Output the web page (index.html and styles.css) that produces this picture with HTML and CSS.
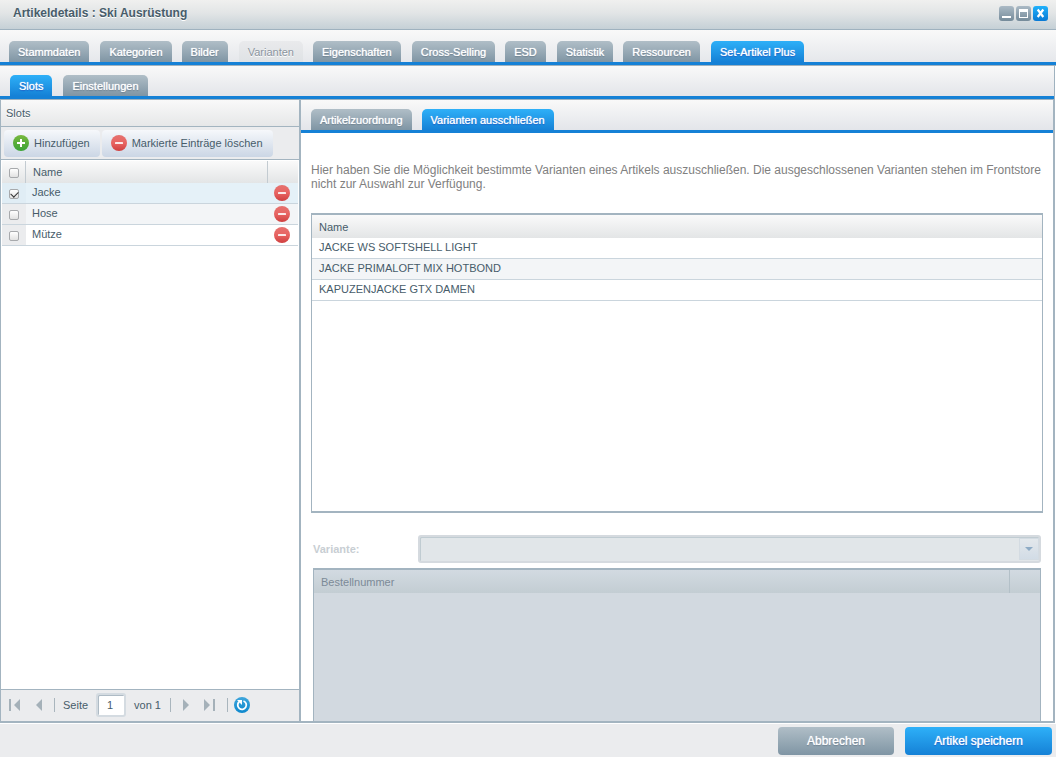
FILE: index.html
```html
<!DOCTYPE html>
<html lang="de">
<head>
<meta charset="utf-8">
<title>Artikeldetails : Ski Ausrüstung</title>
<link rel="stylesheet" href="styles.css">
</head>
<body>
<svg class="defs" aria-hidden="true">
  <defs>
    <linearGradient id="red" x1="0" y1="0" x2="0" y2="1"><stop offset="0" stop-color="#e5726f"/><stop offset=".5" stop-color="#e86462"/><stop offset="1" stop-color="#cf3f3f"/></linearGradient>
    <linearGradient id="green" x1="0" y1="0" x2="0" y2="1"><stop offset="0" stop-color="#78b83e"/><stop offset="1" stop-color="#3aa335"/></linearGradient>
    <linearGradient id="blue" x1="0" y1="0" x2="0" y2="1"><stop offset="0" stop-color="#3fa6dc"/><stop offset="1" stop-color="#0d88cd"/></linearGradient>
    <symbol id="minus" viewBox="0 0 16 16"><circle cx="8" cy="8" r="8" fill="url(#red)"/><rect x="4" y="7" width="8" height="2" rx=".5" fill="#fbe9e9"/></symbol>
    <symbol id="plus" viewBox="0 0 16 16"><circle cx="8" cy="8" r="8" fill="url(#green)"/><path d="M7 4h2v3h3v2H9v3H7V9H4V7h3z" fill="#fff"/></symbol>
  </defs>
</svg>

<header class="titlebar">
  <h1 class="title">Artikeldetails : Ski Ausrüstung</h1>
  <div class="tools">
    <button class="tool" type="button" aria-label="Minimieren"><svg viewBox="0 0 15 15"><rect x="3" y="10" width="9" height="2" fill="#fff"/></svg></button>
    <button class="tool" type="button" aria-label="Maximieren"><svg viewBox="0 0 15 15"><path d="M3 3h9v9H3zM4 6v5h7V6z" fill="#fff" fill-rule="evenodd"/></svg></button>
    <button class="tool tool-close" type="button" aria-label="Schließen"><svg viewBox="0 0 15 15"><path d="M4.700 3.500l5.600 7.500M10.300 3.500l-5.600 7.500" stroke="#fff" stroke-width="2.200"/></svg></button>
  </div>
</header>

<nav class="tabbar">
  <button class="tab" type="button">Stammdaten</button>
  <button class="tab" type="button">Kategorien</button>
  <button class="tab" type="button">Bilder</button>
  <button class="tab" type="button" disabled>Varianten</button>
  <button class="tab" type="button">Eigenschaften</button>
  <button class="tab" type="button">Cross-Selling</button>
  <button class="tab" type="button">ESD</button>
  <button class="tab" type="button">Statistik</button>
  <button class="tab" type="button">Ressourcen</button>
  <button class="tab active" type="button">Set-Artikel Plus</button>
</nav>

<nav class="tabbar sub">
  <button class="tab active" type="button">Slots</button>
  <button class="tab" type="button">Einstellungen</button>
</nav>

<main class="workspace">
  <section class="slots">
    <h2 class="panel-title">Slots</h2>
    <div class="toolbar">
      <button class="action" type="button"><svg class="icon"><use href="#plus"/></svg>Hinzufügen</button>
      <button class="action" type="button"><svg class="icon"><use href="#minus"/></svg>Markierte Einträge löschen</button>
    </div>
    <div class="slot-list">
      <table class="grid checkgrid">
        <thead>
          <tr><th class="check"><input type="checkbox" aria-label="Alle auswählen"></th><th class="name">Name</th><th class="remove"></th></tr>
        </thead>
        <tbody>
          <tr class="selected"><td class="check"><input type="checkbox" aria-label="Jacke auswählen" checked></td><td class="name">Jacke</td><td class="remove"><button class="delete" type="button" aria-label="Jacke löschen"><svg class="icon"><use href="#minus"/></svg></button></td></tr>
          <tr><td class="check"><input type="checkbox" aria-label="Hose auswählen"></td><td class="name">Hose</td><td class="remove"><button class="delete" type="button" aria-label="Hose löschen"><svg class="icon"><use href="#minus"/></svg></button></td></tr>
          <tr><td class="check"><input type="checkbox" aria-label="Mütze auswählen"></td><td class="name">Mütze</td><td class="remove"><button class="delete" type="button" aria-label="Mütze löschen"><svg class="icon"><use href="#minus"/></svg></button></td></tr>
        </tbody>
      </table>
    </div>
    <div class="pager">
      <button class="page-btn" type="button" aria-label="Erste Seite"><svg viewBox="0 0 16 16"><path d="M3 2h2v12H3zM14 2v12L8 8z"/></svg></button>
      <button class="page-btn" type="button" aria-label="Vorherige Seite"><svg viewBox="0 0 16 16"><path d="M12 2v12L6 8z"/></svg></button>
      <span class="sep"></span>
      <label class="page-label" for="page">Seite</label>
      <input class="page-input" id="page" type="text" value="1">
      <span class="page-total">von 1</span>
      <span class="sep"></span>
      <button class="page-btn" type="button" aria-label="Nächste Seite"><svg viewBox="0 0 16 16"><path d="M4 2v12l6-6z"/></svg></button>
      <button class="page-btn" type="button" aria-label="Letzte Seite"><svg viewBox="0 0 16 16"><path d="M1 2v12l6-6zM10 2h2v12h-2z"/></svg></button>
      <span class="sep"></span>
      <button class="page-btn refresh" type="button" aria-label="Aktualisieren"><svg viewBox="0 0 16 16"><circle cx="8" cy="8" r="8" fill="url(#blue)"/><path d="M5.200 4.800A4.300 4.300 0 1 0 9.500 4" fill="none" stroke="#fff" stroke-width="1.800"/><path d="M3 3h5v5z" fill="#fff"/></svg></button>
    </div>
  </section>

  <section class="detail">
    <nav class="tabbar inner">
      <button class="tab" type="button">Artikelzuordnung</button>
      <button class="tab active" type="button">Varianten ausschließen</button>
    </nav>
    <div class="content">
      <p class="hint">Hier haben Sie die Möglichkeit bestimmte Varianten eines Artikels auszuschließen. Die ausgeschlossenen Varianten stehen im Frontstore nicht zur Auswahl zur Verfügung.</p>
      <div class="box variants">
        <table class="grid">
          <thead><tr><th>Name</th></tr></thead>
          <tbody>
            <tr><td>JACKE WS SOFTSHELL LIGHT</td></tr>
            <tr><td>JACKE PRIMALOFT MIX HOTBOND</td></tr>
            <tr><td>KAPUZENJACKE GTX DAMEN</td></tr>
          </tbody>
        </table>
      </div>
      <div class="variant-form">
        <div class="field">
          <label class="field-label" for="variant">Variante:</label>
          <div class="combo">
            <select class="combo-select" id="variant" disabled><option></option></select>
            <span class="trigger"><svg viewBox="0 0 8 4"><path d="M0 0h8L4 4z" fill="#8eabc5"/></svg></span>
          </div>
        </div>
        <div class="box numbers">
          <table class="grid">
            <thead><tr><th>Bestellnummer</th><th class="remove"></th></tr></thead>
          </table>
        </div>
      </div>
    </div>
  </section>
</main>

<footer class="footer">
  <button class="btn cancel" type="button">Abbrechen</button>
  <button class="btn save" type="button">Artikel speichern</button>
</footer>
</body>
</html>
```
FILE: styles.css
```css
* {
  box-sizing: border-box;
}

body {
  display: flex;
  flex-direction: column;
  height: 100vh;
  margin: 0;
  overflow: hidden;
  background: #fff;
  color: #475c6a;
  font: 11px/14px "Liberation Sans", Arial, sans-serif;
}

button,
input,
select {
  margin: 0;
  padding: 0;
  border: 0;
  color: inherit;
  font: inherit;
}

button {
  background: none;
}

.defs {
  position: absolute;
  width: 0;
  height: 0;
}

.icon {
  display: block;
  flex: none;
  width: 16px;
  height: 16px;
}

.titlebar {
  display: flex;
  justify-content: space-between;
  flex: none;
  height: 30px;
  padding: 6px 8px 0 13px;
  border-bottom: 1px solid #9fb2bf;
  background: linear-gradient(#f0f0ef, #e2e5e6 45%, #c5d0d6);
}

.title {
  margin: 0;
  font-size: 12px;
  line-height: 14px;
  text-shadow: 0 1px 0 #fff;
}

.tools {
  display: flex;
  gap: 2px;
}

.tool {
  width: 15px;
  height: 15px;
  border-radius: 3px;
  background: linear-gradient(#abbac5, #758b9a);
}

.tool svg {
  display: block;
}

.tool-close {
  background: linear-gradient(#20b1fb, #0879d4);
}

.tabbar {
  display: flex;
  align-items: flex-end;
  gap: 10px;
  flex: none;
  height: 36px;
  padding: 0 0 3px 9px;
  border-bottom: 1px solid #9fb2bf;
  background: linear-gradient(#f9f9f9, #e5e7eb 32px, #1581d6 32px);
}

.tabbar.sub {
  gap: 11px;
  height: 34px;
  margin-right: 1px;
  padding-left: 10px;
  border-right: 1px solid #9fb2bf;
  background: linear-gradient(#f9f9f9, #e3e5ea 30px, #1581d6 30px);
}

.tabbar.inner {
  height: 33px;
  padding-left: 10px;
  border-bottom: 0;
  background: linear-gradient(#f9f9f9, #e3e5ea 30px, #1581d6 30px);
}

.tab {
  height: 21px;
  padding: 0 9px;
  border-radius: 5px 5px 0 0;
  background: linear-gradient(#b0bec7, #7f95a4);
  color: #fff;
  line-height: 20px;
  text-shadow: 0 0 1px #fff, 0 1px 1px #5d7383;
  white-space: nowrap;
}

.tab:nth-child(odd) {
  margin-right: 1px;
}

.sub .tab,
.inner .tab {
  margin-right: 0;
}

.tab.active {
  background: linear-gradient(#2eb0f8, #1581d6);
  text-shadow: 0 0 1px #fff, 0 1px 1px #0a4fc0;
}

.tab:disabled {
  background: linear-gradient(#e9eaec, #dfe2e5);
  color: #8b959f;
  text-shadow: 0 1px 0 #fff;
}

.workspace {
  display: flex;
  flex: 1;
  min-height: 0;
  margin-right: 1px;
  border-right: 2px solid #a3b4c0;
  border-bottom: 2px solid #a3b4c0;
}

.slots {
  display: flex;
  flex-direction: column;
  flex: 0 0 301px;
  border-left: 1px solid #a3b4c0;
  border-right: 2px solid #a3b4c0;
}

.panel-title {
  margin: 0;
  padding: 6px 5px;
  border-bottom: 1px solid #a3b4c0;
  background: linear-gradient(#f9f9f9, #e6e7e8);
  font-size: 11px;
  font-weight: 400;
  line-height: 14px;
  text-shadow: 0 1px 0 #fff;
}

.toolbar {
  display: flex;
  gap: 2px;
  padding: 3px 3px 2px;
  border-bottom: 1px solid #a3b4c0;
  background: #ebecee;
}

.action {
  display: flex;
  align-items: center;
  gap: 5px;
  height: 27px;
  padding: 0 10px 1px 9px;
  border-radius: 4px;
  background: linear-gradient(#f6f8fb, #cbd6e5);
  white-space: nowrap;
}

.slot-list {
  flex: 1;
  min-height: 0;
  padding: 1px 1px 0;
  background: #fff;
}

.grid {
  width: 100%;
  border-spacing: 0;
  table-layout: fixed;
}

.grid th,
.grid td {
  height: 21px;
  padding: 0 7px 2px;
  border-bottom: 1px solid #cad5dd;
  font-weight: 400;
  text-align: left;
  vertical-align: middle;
}

.grid th {
  height: 23px;
  padding: 1px 7px 0;
  border-bottom: 0;
  background: linear-gradient(#fafafa, #e3e5e6);
}

.grid tbody tr:nth-child(even) {
  background: #f3f5f7;
}

.checkgrid tbody tr.selected {
  background: #e5f1f8;
}

.checkgrid th {
  height: 22px;
  padding-top: 0;
}

.grid .check {
  width: 24px;
  padding: 1px 0 0 7px;
}

.checkgrid td.check {
  background: #ebecee;
}

.checkgrid .selected td.check {
  background: #e0edf5;
}

.checkgrid th.check,
.checkgrid th.name {
  border-right: 1px solid #c3cbd1;
}

.grid .remove {
  width: 31px;
}

.checkgrid .remove {
  width: 30px;
}

.checkgrid td.remove {
  padding: 0 6px;
}

.checkgrid td.name {
  padding-left: 6px;
}

.delete {
  display: block;
}

.check input {
  display: block;
  appearance: none;
  width: 10px;
  height: 10px;
  border: 1px solid #a7a9ac;
  border-radius: 2px;
  background: linear-gradient(#fff, #e2e2e2);
}

.check input:checked::after {
  display: block;
  width: 6px;
  height: 4px;
  margin: 1px;
  border-bottom: 1px solid #333;
  border-left: 1px solid #333;
  content: "";
  transform: rotate(-45deg);
}

.pager {
  display: flex;
  align-items: center;
  height: 32px;
  padding: 0 0 1px 5px;
  border-top: 1px solid #a3b4c0;
  background: #ebecee;
}

.page-btn {
  width: 16px;
  height: 16px;
  margin-right: 8px;
}

.page-btn svg {
  display: block;
  fill: #a5b1b9;
}

.sep {
  width: 1px;
  height: 14px;
  margin-right: 8px;
  background: #a9b5bd;
}

.page-input {
  width: 30px;
  height: 24px;
  margin: 0 8px;
  padding-left: 9px;
  border: 2px solid #d4dbe1;
  border-radius: 3px;
  background: #fff;
  box-shadow: inset 1px 1px 0 #aebbc5;
}

.page-total {
  margin-right: 9px;
}

.refresh {
  margin-left: -2px;
}

.detail {
  display: flex;
  flex-direction: column;
  flex: 1;
  min-width: 0;
}

.content {
  display: flex;
  flex-direction: column;
  flex: 1;
  min-height: 0;
  padding: 30px 10px 0;
}

.hint {
  margin: 0 0 22px;
  color: #808080;
  font-size: 12px;
  line-height: 14px;
}

.box {
  border: 1px solid #a3b4c0;
  border-top-width: 2px;
}

.variants {
  flex: none;
  height: 300px;
  border-bottom-width: 2px;
}

.variant-form {
  display: flex;
  flex-direction: column;
  gap: 5px;
  flex: 1;
  min-height: 0;
  padding: 22px 2px 0;
}

.field {
  display: flex;
  align-items: center;
}

.field-label {
  flex: 0 0 105px;
  color: #c8ced3;
  font-weight: 700;
}

.combo {
  position: relative;
  flex: 1;
  height: 28px;
}

.combo-select {
  display: block;
  appearance: none;
  width: 100%;
  height: 28px;
  border: 2px solid #d5dadf;
  border-radius: 3px;
  background: #e1e6e9;
  box-shadow: inset 1px 1px 0 #c0ccd2;
  opacity: 1;
}

.trigger {
  display: flex;
  position: absolute;
  top: 3px;
  right: 2px;
  align-items: center;
  justify-content: center;
  width: 20px;
  height: 22px;
  border: 1px solid #d3dbe2;
  background: linear-gradient(#e3e8ec, #d2dce6);
  pointer-events: none;
}

.trigger svg {
  width: 8px;
  height: 4px;
}

.numbers {
  flex: 1;
  min-height: 0;
  border-bottom: 0;
  background: #d2d9e0;
}

.numbers th {
  background: linear-gradient(#d2dae1, #c3cdd3);
  color: #7c8a97;
}

.numbers th.remove {
  border-left: 1px solid #b3c0c8;
}

.footer {
  display: flex;
  gap: 11px;
  justify-content: flex-end;
  flex: none;
  padding: 3px 4px 2px;
  border-top: 1px solid #fff;
  background: #ebecee;
}

.btn {
  height: 28px;
  border-radius: 4px;
  color: #fff;
  font-size: 12px;
  line-height: 28px;
}

.cancel {
  width: 116px;
  background: linear-gradient(#b0bec7, #7f95a4);
  text-shadow: 0 0 1px #fff, 0 1px 1px #5d7383;
}

.save {
  width: 147px;
  background: linear-gradient(#2eb0f8, #1581d6);
  text-shadow: 0 0 1px #fff, 0 1px 1px #0a4fc0;
}
```
